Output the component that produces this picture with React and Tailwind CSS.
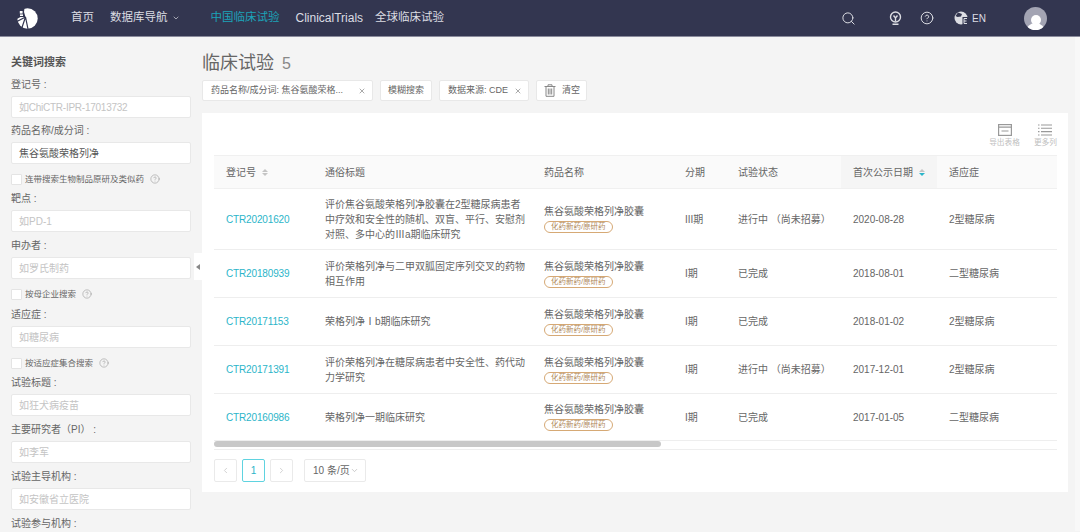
import { Search, ChevronDown, ChevronLeft, ChevronRight, CircleHelp, X } from "lucide-react";

const cjk = "font-['Liberation_Sans','Noto_Sans_CJK_SC',sans-serif]";

const rows = [
  { id: "CTR20201620", title: "评价焦谷氨酸荣格列净胶囊在2型糖尿病患者中疗效和安全性的随机、双盲、平行、安慰剂对照、多中心的Ⅲa期临床研究", phase: "III期", status: "进行中 （尚未招募）", date: "2020-08-28", ind: "2型糖尿病", h: "h-[61px]" },
  { id: "CTR20180939", title: "评价荣格列净与二甲双胍固定序列交叉的药物相互作用", phase: "I期", status: "已完成", date: "2018-08-01", ind: "二型糖尿病", h: "h-[48px]" },
  { id: "CTR20171153", title: "荣格列净Ⅰb期临床研究", phase: "I期", status: "已完成", date: "2018-01-02", ind: "2型糖尿病", h: "h-[48px]" },
  { id: "CTR20171391", title: "评价荣格列净在糖尿病患者中安全性、药代动力学研究", phase: "I期", status: "进行中 （尚未招募）", date: "2017-12-01", ind: "2型糖尿病", h: "h-[48px]" },
  { id: "CTR20160986", title: "荣格列净一期临床研究", phase: "I期", status: "已完成", date: "2017-01-05", ind: "二型糖尿病", h: "h-[47px]" },
];

function Logo() {
  return (
    <svg width="21" height="21" viewBox="0 0 21 21">
      <circle cx="10.5" cy="10.5" r="10.2" fill="#fff" />
      <path d="M0 0 H7.5 L7 4 L8.5 9 L3.5 9 L0 11 Z" fill="#333650" />
      <rect x="2.8" y="3" width="2.8" height="2.6" fill="#fff" />
      <rect x="3" y="6.4" width="3" height="1.6" fill="#fff" />
      <path d="M8.5 9 L0 13.5 M8.5 9 L4.5 21 M8.5 9 L11 21" stroke="#333650" strokeWidth="1.2" fill="none" />
    </svg>
  );
}

function Bulb() {
  return (
    <svg width="13" height="15" viewBox="0 0 13 15" fill="none" stroke="currentColor" strokeWidth="1.4" className="ml-[33px]">
      <circle cx="6.5" cy="6" r="5" />
      <path d="M4.5 4.5 L6.5 7 L8.5 4.5 M6.5 7 V10.5 M3.5 13.3 H9.5" />
    </svg>
  );
}

function Lang() {
  return (
    <svg width="14" height="14" viewBox="0 0 14 14" className="ml-[20px]">
      <circle cx="7" cy="7" r="6.5" fill="currentColor" />
      <path d="M4 1.5 L8 3 L7 5.5 L3.5 6 L1.5 5 Z M8.5 6 H14 V14 H8.5 Z" fill="#333650" />
      <path d="M10 7.5 H13 M10 7.5 V12.5 H13 M10 10 H12.5" stroke="currentColor" strokeWidth="1" fill="none" />
    </svg>
  );
}

function Sort({ active }) {
  return (
    <span className="inline-flex flex-col gap-[1px] ml-[6px] align-middle">
      <span className="w-0 h-0 border-x-[3px] border-x-transparent border-b-[3px] border-b-[#c4c4c4]" />
      <span className={active ? "w-0 h-0 border-x-[3px] border-x-transparent border-t-[3px] border-t-[#2bb5c9]" : "w-0 h-0 border-x-[3px] border-x-transparent border-t-[3px] border-t-[#c4c4c4]"} />
    </span>
  );
}

function Field({ label, placeholder, value, tight }) {
  return (
    <div>
      <div className="h-[14px] pt-px text-[10px] leading-[14px] text-[#666] mb-[5px]">{label}</div>
      <div className={value ? "h-[22px] bg-white border border-[#e8e8e8] rounded-[2px] px-[7px] flex items-center text-[10px] text-[#555]" : "h-[22px] bg-white border border-[#e8e8e8] rounded-[2px] px-[7px] flex items-center text-[10px] text-[#c4c4c4]"}>
        <span className={tight ? "tracking-[-0.25px]" : ""}>{value || placeholder}</span>
      </div>
    </div>
  );
}

function Check({ label }) {
  return (
    <div className="flex items-center h-[12px] text-[8.5px] text-[#666]">
      <span className="w-[11px] h-[11px] bg-white border border-[#e4e4e4] rounded-[1px] mr-[3px]" />
      <span>{label}</span>
      <CircleHelp size={10} strokeWidth={1.2} className="ml-[6px] text-[#888]" />
    </div>
  );
}

function Chip({ children, className }) {
  return (
    <div className={"h-[21px] bg-white border border-[#e8e8e8] rounded-[2px] flex items-center text-[9px] text-[#666] " + className}>
      {children}
    </div>
  );
}

function Sidebar() {
  return (
    <aside className="w-[202px] shrink-0 pl-[11px] pr-[11px] pt-[17px] flex flex-col relative">
      <div className="text-[11px] leading-[16px] font-bold text-[#555] mb-[7px]">关键词搜索</div>
      <Field label="登记号 :" placeholder="如ChiCTR-IPR-17013732" tight />
      <div className="h-[5px] shrink-0" />
      <Field label="药品名称/成分词 :" value="焦谷氨酸荣格列净" />
      <div className="h-[9px] shrink-0" />
      <Check label="连带搜索生物制品原研及类似药" />
      <div className="h-[6px] shrink-0" />
      <Field label="靶点 :" placeholder="如PD-1" />
      <div className="h-[6px] shrink-0" />
      <Field label="申办者 :" placeholder="如罗氏制药" />
      <div className="h-[9px] shrink-0" />
      <Check label="按母企业搜索" />
      <div className="h-[7px] shrink-0" />
      <Field label="适应症 :" placeholder="如糖尿病" />
      <div className="h-[9px] shrink-0" />
      <Check label="按适应症集合搜索" />
      <div className="h-[6px] shrink-0" />
      <Field label="试验标题 :" placeholder="如狂犬病疫苗" />
      <div className="h-[6px] shrink-0" />
      <Field label="主要研究者（PI） :" placeholder="如李军" />
      <div className="h-[6px] shrink-0" />
      <Field label="试验主导机构 :" placeholder="如安徽省立医院" />
      <div className="h-[6px] shrink-0" />
      <div className="pt-px text-[10px] leading-[14px] text-[#666]">试验参与机构 :</div>
      <div className="absolute left-[194px] top-[216px] w-[8px] h-[27px] bg-white flex items-center justify-center">
        <span className="w-0 h-0 border-y-[3px] border-y-transparent border-r-[4px] border-r-[#888]" />
      </div>
    </aside>
  );
}

export default function App() {
  return (
    <div className={"h-[532px] overflow-hidden bg-[#f4f4f4] " + cjk}>
      <header className="h-[37px] bg-[#333650] border-b border-[#8a8b9c] flex items-center text-[#dcdde3]">
        <div className="w-[71px] pl-[17px]"><Logo /></div>
        <span className="text-[11.5px]">首页</span>
        <span className="text-[11.5px] ml-[16px] flex items-center">数据库导航<ChevronDown size={8} className="ml-[4px]" /></span>
        <span className="text-[11.5px] ml-[31px] text-[#1ba3b8]">中国临床试验</span>
        <span className="text-[12px] ml-[16px]">ClinicalTrials</span>
        <span className="text-[11.5px] ml-[12px]">全球临床试验</span>
        <div className="ml-auto flex items-center">
          <Search size={15} strokeWidth={1.6} />
          <Bulb />
          <CircleHelp size={14} strokeWidth={1.7} className="ml-[18px]" />
          <Lang />
          <span className="text-[10px] ml-[4px]">EN</span>
          <div className="w-[23px] h-[23px] rounded-full bg-[#a3a4b3] ml-[38px] mr-[33px] overflow-hidden flex flex-col items-center justify-end">
            <span className="w-[10px] h-[10px] rounded-full bg-white mb-[-2px]" />
            <span className="w-[19px] h-[9px] rounded-t-full bg-white mb-[-2px]" />
          </div>
        </div>
      </header>

      <div className="flex">
        <Sidebar />
        <main className="w-[866px] shrink-0 pt-[13px]">
          <div className="flex items-baseline h-[26px]">
            <span className="text-[18px] text-[#666]">临床试验</span>
            <span className="text-[16px] text-[#888] ml-[8px]">5</span>
          </div>
          <div className="flex gap-[7px] mt-[4px]">
            <Chip className="w-[171px] pl-[8px] pr-[6px] justify-between">
              <span>药品名称/成分词: 焦谷氨酸荣格...</span>
              <X size={8} strokeWidth={2.5} className="text-[#999]" />
            </Chip>
            <Chip className="w-[52px] justify-center">模糊搜索</Chip>
            <Chip className="w-[90px] pl-[8px] pr-[6px] justify-between">
              <span>数据来源: CDE</span>
              <X size={8} strokeWidth={2.5} className="text-[#999]" />
            </Chip>
            <Chip className="w-[51px] pl-[7px] gap-[6px]">
              <svg width="12" height="13" viewBox="0 0 12 13" fill="none" stroke="#888" strokeWidth="1">
                <path d="M0.5 2.5 H11.5 M4 2.5 V0.8 H8 V2.5 M2 2.5 V12.3 H10 V2.5 M4.3 4.5 V10.5 M6 4.5 V10.5 M7.7 4.5 V10.5" />
              </svg>
              <span>清空</span>
            </Chip>
          </div>

          <section className="mt-[12px] h-[379px] bg-white px-[12px] pt-[11px]">
            <div className="flex justify-end gap-[14px] h-[31px] -mr-px text-[#c0c0c0] text-[7.7px] leading-[10px]">
              <div className="flex flex-col items-center gap-[2px]">
                <svg width="14" height="12" viewBox="0 0 14 12" fill="none" stroke="#999" strokeWidth="1.2">
                  <rect x="0.6" y="0.6" width="12.8" height="10.8" />
                  <path d="M0.6 3.2 H13.4 M3.5 7 H10.5" />
                </svg>
                <span>导出表格</span>
              </div>
              <div className="flex flex-col items-center gap-[2px]">
                <svg width="14" height="12" viewBox="0 0 14 12" fill="none" stroke="#999" strokeWidth="1.1">
                  <path d="M0 1 H1.5 M3 1 H14 M0 4.3 H1.5 M3 4.3 H14 M0 7.6 H1.5 M3 7.6 H14 M0 11 H1.5 M3 11 H14" />
                </svg>
                <span>更多列</span>
              </div>
            </div>
            <table className="w-[843px] table-fixed border-collapse text-[10px] leading-[15px] text-[#666]">
              <colgroup>
                <col className="w-[99px]" />
                <col className="w-[219px]" />
                <col className="w-[141px]" />
                <col className="w-[53px]" />
                <col className="w-[115px]" />
                <col className="w-[96px]" />
                <col className="w-[120px]" />
              </colgroup>
              <thead>
                <tr className="h-[33px] bg-[#fafafa] border-y border-[#f0f0f0] text-left">
                  <th className="font-normal px-[12px]">登记号<Sort /></th>
                  <th className="font-normal px-[12px]">通俗标题</th>
                  <th className="font-normal px-[12px]">药品名称</th>
                  <th className="font-normal px-[12px]">分期</th>
                  <th className="font-normal px-[12px]">试验状态</th>
                  <th className="font-normal pl-[12px] pr-0 bg-[#f5f5f5] whitespace-nowrap">首次公示日期<Sort active /></th>
                  <th className="font-normal px-[12px]">适应症</th>
                </tr>
              </thead>
              <tbody>
                {rows.map((r) => (
                  <tr key={r.id} className={r.h + " border-b border-[#eeeeee]"}>
                    <td className="px-[12px] text-[#2bb5c9] tracking-[-0.15px]">{r.id}</td>
                    <td className="pl-[12px] pr-[6px]">{r.title}</td>
                    <td className="px-[12px]">
                      <div className="leading-[14px]">焦谷氨酸荣格列净胶囊</div>
                      <span className="block w-fit mt-[2px] h-[12px] leading-[10px] px-[6px] border border-[#d6a975] rounded-full text-[7.5px] text-[#b08a5c]">化药新药/原研药</span>
                    </td>
                    <td className="px-[12px]">{r.phase}</td>
                    <td className="px-[12px] whitespace-nowrap">{r.status}</td>
                    <td className="px-[12px]">{r.date}</td>
                    <td className="px-[12px]">{r.ind}</td>
                  </tr>
                ))}
              </tbody>
            </table>
            <div className="w-[843px] h-[9px] border-b border-[#eeeeee]">
              <div className="w-[447px] h-[6px] rounded-full bg-[#c8c8c8]" />
            </div>
            <div className="flex mt-[9px] text-[#666]">
              <span className="w-[23px] h-[23px] border border-[#eaeaea] rounded-[2px] flex items-center justify-center text-[#c4c4c4]"><ChevronLeft size={9} /></span>
              <span className="w-[23px] h-[23px] ml-[5px] border border-[#5fd3e0] rounded-[2px] flex items-center justify-center text-[10px] text-[#2bb5c9]">1</span>
              <span className="w-[23px] h-[23px] ml-[5px] border border-[#eaeaea] rounded-[2px] flex items-center justify-center text-[#c4c4c4]"><ChevronRight size={9} /></span>
              <span className="w-[62px] h-[23px] ml-[11px] border border-[#eaeaea] rounded-[2px] flex items-center pl-[8px] text-[10px] whitespace-nowrap">10 条/页<ChevronDown size={9} className="text-[#bbb]" /></span>
            </div>
          </section>
        </main>
        <div className="ml-auto w-[5px] bg-[#f8f8f8]" />
      </div>
    </div>
  );
}
